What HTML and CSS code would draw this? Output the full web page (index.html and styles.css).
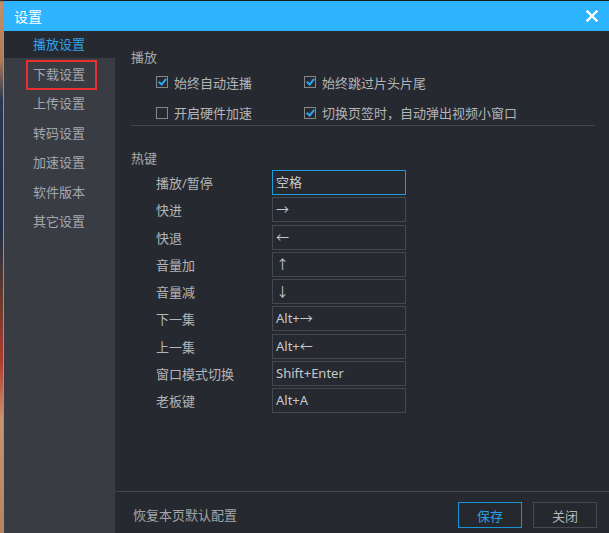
FILE: index.html
```html
<!DOCTYPE html>
<html lang="zh-CN">
<head>
    <meta charset="UTF-8">
    <meta name="viewport" content="width=device-width, initial-scale=1.0">
    <title>设置</title>
    <link rel="stylesheet" href="styles.css">
</head>
<body>
    <div class="backdrop"></div>
    <div class="window">
        <div class="titlebar">
            <span class="title">设置</span>
            <svg class="close" width="12" height="12" viewBox="0 0 12 12">
                <path d="M1.5 1.5 L10.5 10.5 M10.5 1.5 L1.5 10.5" stroke="#fff" stroke-width="2.4" stroke-linecap="square"/>
            </svg>
        </div>

        <div class="body">
            <div class="sidebar">
                <div class="nav-item active">播放设置</div>
                <div class="nav-list">
                    <div class="nav-item marked">下载设置</div>
                    <div class="nav-item">上传设置</div>
                    <div class="nav-item">转码设置</div>
                    <div class="nav-item">加速设置</div>
                    <div class="nav-item">软件版本</div>
                    <div class="nav-item">其它设置</div>
                </div>
            </div>

            <div class="panel">
                <div class="content">
                    <div class="section-title">播放</div>
                    <div class="options">
                        <label class="option"><span class="box checked"></span>始终自动连播</label>
                        <label class="option"><span class="box checked"></span>始终跳过片头片尾</label>
                        <label class="option"><span class="box"></span>开启硬件加速</label>
                        <label class="option"><span class="box checked"></span>切换页签时，自动弹出视频小窗口</label>
                    </div>
                    <div class="divider"></div>

                    <div class="section-title hotkey-title">热键</div>
                    <div class="hotkeys">
                        <span class="key-label">播放/暂停</span><div class="key-field focus">空格</div>
                        <span class="key-label">快进</span><div class="key-field">→</div>
                        <span class="key-label">快退</span><div class="key-field">←</div>
                        <span class="key-label">音量加</span><div class="key-field">↑</div>
                        <span class="key-label">音量减</span><div class="key-field">↓</div>
                        <span class="key-label">下一集</span><div class="key-field">Alt+→</div>
                        <span class="key-label">上一集</span><div class="key-field">Alt+←</div>
                        <span class="key-label">窗口模式切换</span><div class="key-field">Shift+Enter</div>
                        <span class="key-label">老板键</span><div class="key-field">Alt+A</div>
                    </div>
                </div>

                <div class="footer">
                    <span class="reset">恢复本页默认配置</span>
                    <div class="actions">
                        <button class="btn primary">保存</button>
                        <button class="btn">关闭</button>
                    </div>
                </div>
            </div>
        </div>
    </div>
</body>
</html>
```

FILE: styles.css
```css
body {
    margin: 0;
    width: 609px;
    height: 533px;
    overflow: hidden;
    display: flex;
    background-color: #161a22;
    font-family: "Noto Sans", "Noto Sans CJK SC", sans-serif;
    font-size: 13px;
}

.backdrop {
    width: 3px;
    flex-shrink: 0;
    background: linear-gradient(to bottom,
        #1b1f28 0px, #c4906c 2px, #b07a5a 60px, #2a3850 100px,
        #203048 230px, #6a3a2a 300px, #b03a30 360px, #c89474 420px, #b4845e 533px);
}

.window {
    margin-top: 1px;
    width: 606px;
    height: 532px;
    display: flex;
    flex-direction: column;
    border-left: 1px solid #2db2fe;
    box-sizing: border-box;
}

.titlebar {
    height: 30px;
    flex-shrink: 0;
    background-color: #2eb3fe;
    display: flex;
    align-items: center;
    justify-content: space-between;
    padding: 0 11px 0 10px;
}

.title {
    color: #fff;
    font-size: 14px;
}

.body {
    flex: 1;
    display: flex;
    min-height: 0;
}

.sidebar {
    width: 111px;
    flex-shrink: 0;
    display: flex;
    flex-direction: column;
    background-color: #393c43;
}

.nav-list {
    flex: 1;
    padding-top: 2px;
}

.nav-item {
    position: relative;
    height: 29.4px;
    line-height: 29px;
    padding-left: 29px;
    color: #a4a7ac;
}

.nav-item.active {
    height: 27px;
    line-height: 27px;
    background-color: #26292f;
    color: #2ea2ec;
}

.nav-item.marked::after {
    content: "";
    position: absolute;
    left: 22px;
    top: 0;
    width: 71px;
    height: 30px;
    border: 2px solid #ea302c;
    box-sizing: border-box;
}

.panel {
    flex: 1;
    display: flex;
    flex-direction: column;
    background-color: #26292f;
}

.content {
    flex: 1;
    padding: 16px 14px 0 16px;
}

.section-title {
    line-height: 20px;
    color: #a6a8ac;
}

.options {
    display: grid;
    grid-template-columns: 148px auto;
    grid-auto-rows: 20px;
    row-gap: 10.5px;
    margin: 5px 0 2.5px 25px;
}

.option {
    display: flex;
    align-items: center;
    color: #b3b5b8;
}

.box {
    width: 12px;
    height: 12px;
    margin-right: 6px;
    border: 1px solid #84878c;
    box-sizing: border-box;
    position: relative;
}

.box.checked::after {
    content: "";
    position: absolute;
    left: 3px;
    top: 0px;
    width: 3px;
    height: 6px;
    border-right: 2px solid #2fa6f4;
    border-bottom: 2px solid #2fa6f4;
    transform: rotate(40deg);
}

.divider {
    height: 1px;
    background-color: #44474d;
}

.hotkey-title {
    margin-top: 22px;
}

.hotkeys {
    display: grid;
    grid-template-columns: 116px 134px;
    grid-auto-rows: 25px;
    row-gap: 2.25px;
    margin: 2px 0 0 25px;
    align-items: center;
}

.key-label {
    color: #b3b5b8;
}

.key-field {
    height: 25px;
    line-height: 23px;
    padding-left: 3px;
    border: 1px solid #45484e;
    box-sizing: border-box;
    color: #c6c8cb;
}

.key-field.focus {
    border-color: #1f9bd8;
}

.footer {
    height: 42px;
    flex-shrink: 0;
    box-sizing: border-box;
    border-top: 1px solid #44474d;
    display: flex;
    justify-content: space-between;
    align-items: flex-start;
    padding: 10px 12px 0 18px;
}

.reset {
    line-height: 26px;
    color: #a2a5a9;
}

.actions {
    display: flex;
    gap: 11px;
}

.btn {
    width: 64px;
    height: 26px;
    padding: 0;
    font-family: inherit;
    font-size: 13px;
    color: #b6b8bb;
    background-color: #25282d;
    border: 1px solid #46494f;
    cursor: pointer;
}

.btn.primary {
    color: #2ba0e8;
    border-color: #1e92d4;
}
```
